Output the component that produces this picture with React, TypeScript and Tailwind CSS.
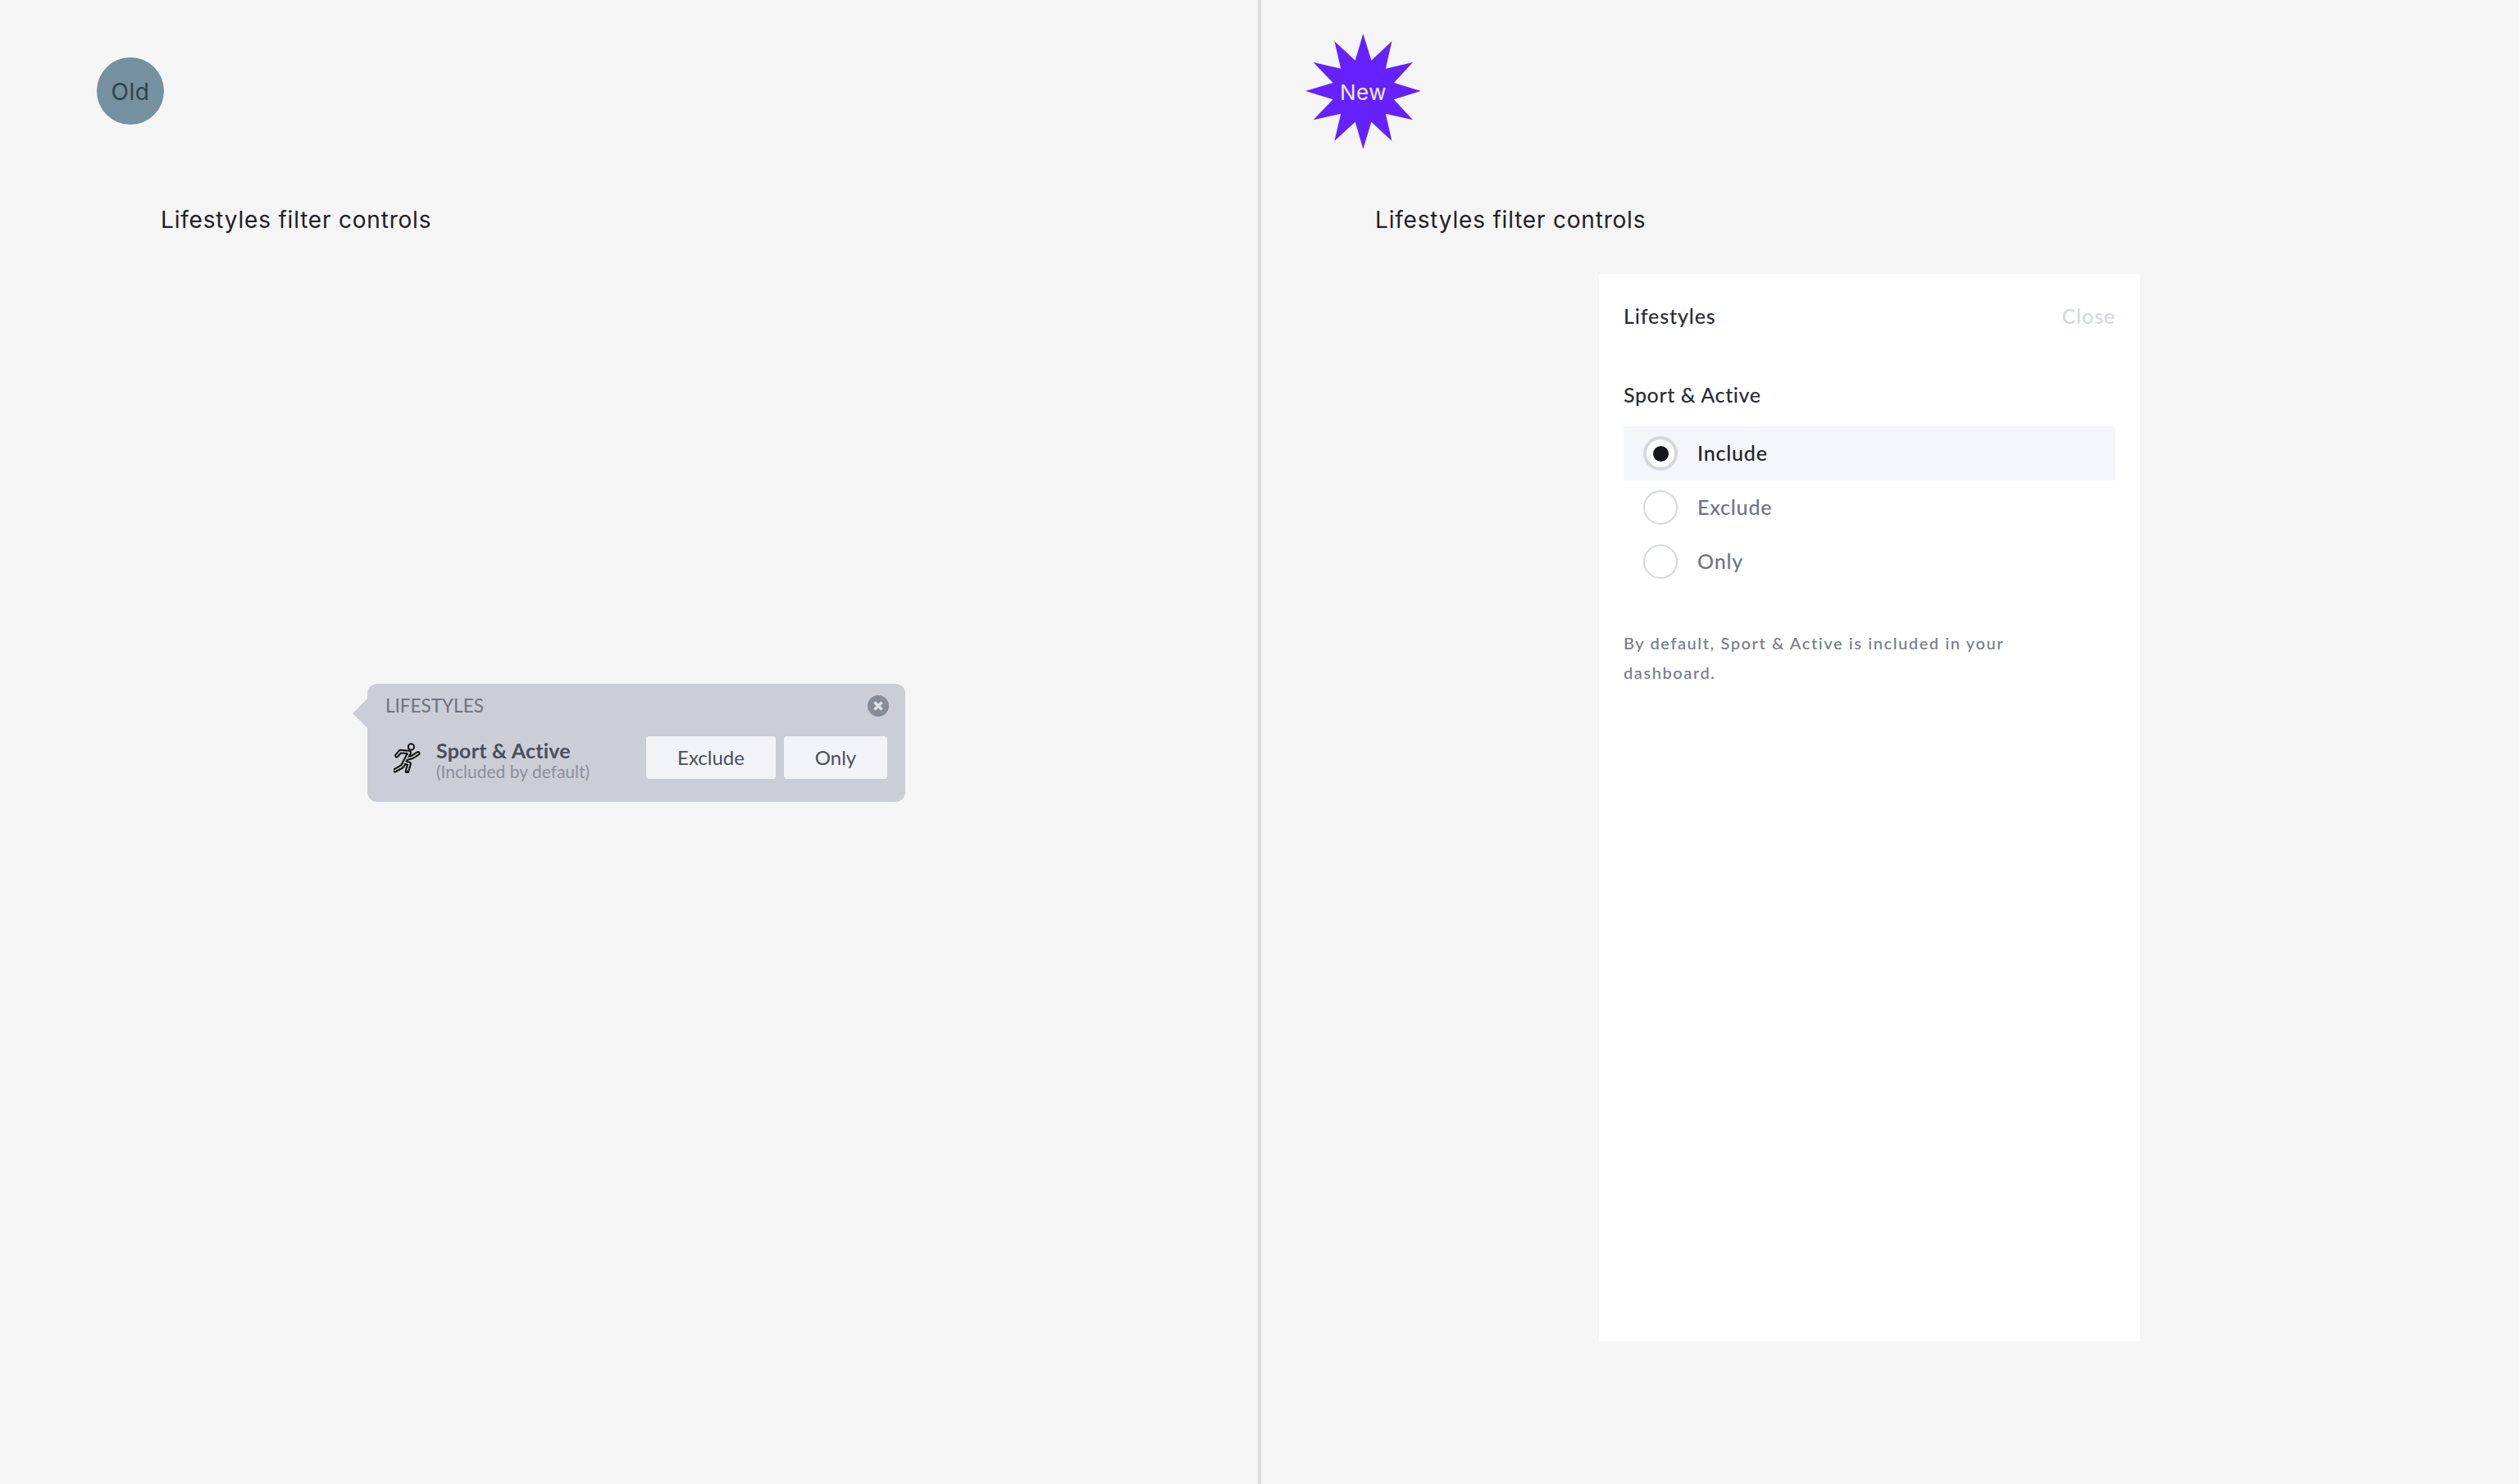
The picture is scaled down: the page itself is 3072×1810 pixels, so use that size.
const sans = "font-['Lato','Liberation_Sans',sans-serif]";

function Heading({ className }: { className: string }) {
  return (
    <h2 className={`font-['Inter',sans-serif] text-[28px] leading-[36px] font-normal tracking-[0.8px] text-[#1f2023] ${className}`}>
      Lifestyles filter controls
    </h2>
  );
}

function StarBadge() {
  return (
    <div className="relative h-[141px] w-[141px]">
      <svg viewBox="0 0 141 141" className="h-full w-full">
        <polygon
          fill="#6621ff"
          points="70.400,0 80.400,32.700 105.400,9.300 97.900,42.700 131,35 107.900,60 140.700,70 107.900,80.300 131,105.300 97.900,97.700 105.400,131 80.400,107.700 70.400,140.700 60.700,107.700 35.400,131 43.200,97.700 9.600,105.300 33.600,80.300 0,70 33.600,60 9.600,35 43.200,42.700 35.400,9.300 60.700,32.700"
        />
      </svg>
      <span className="absolute inset-0 flex items-center justify-center pt-[2px] font-['Inter',sans-serif] text-[26px] font-normal tracking-[0.5px] text-[#f0e9ff]">
        New
      </span>
    </div>
  );
}

function Runner() {
  const limbs = "M118 88 L85 85 L72 100 M118 90 L100 125 L92 140 L65 155 M100 125 L118 130 L110 158 M112 110 L130 105 L150 92";
  return (
    <svg viewBox="60 50 100 115" className="h-[38px] w-[33px] shrink-0" fill="none">
      <circle cx="125" cy="68" r="11" stroke="#111" strokeWidth="6" />
      <path d={limbs} stroke="#111" strokeWidth="17" strokeLinecap="round" strokeLinejoin="round" />
      <path d={limbs} stroke="#cbced6" strokeWidth="5" strokeLinecap="round" strokeLinejoin="round" strokeDasharray="7 5" />
    </svg>
  );
}

function OldPopup() {
  return (
    <div className={`relative flex h-[144px] w-[656px] flex-col rounded-[12px] bg-[#cbced6] pl-[22px] pr-[22px] ${sans}`}>
      <div className="absolute left-[-18px] top-[18px] h-[36px] w-[18px] bg-[#cbced6] [clip-path:polygon(100%_0,100%_100%,0_50%)]" />
      <div className="flex h-[54px] items-center justify-between">
        <span className="text-[22.500px] leading-none text-[#6d7380]">LIFESTYLES</span>
        <svg viewBox="0 0 26 26" className="mr-[-2px] h-[26px] w-[26px]">
          <circle cx="13" cy="13" r="13" fill="#878c99" />
          <path d="M8.500 8.500 L17.500 17.500 M17.500 8.500 L8.500 17.500" stroke="#dfe1e6" strokeWidth="3.500" />
        </svg>
      </div>
      <div className="mt-[10px] flex h-[52px] items-center">
        <div className="ml-[10px] mr-[19px]">
          <Runner />
        </div>
        <div className="flex w-[256px] flex-col pt-[6px]">
          <span className="text-[25px] leading-[28px] font-bold tracking-[0.2px] text-[#4a4f5c]">Sport &amp; Active</span>
          <span className="text-[21px] leading-[24px] text-[#8b909c]">(Included by default)</span>
        </div>
        <button className="h-[52px] w-[158px] rounded-[4px] bg-[#f2f3f7] text-[24px] text-[#4a4f5c]">Exclude</button>
        <button className="ml-[10px] h-[52px] w-[126px] rounded-[4px] bg-[#f2f3f7] text-[24px] text-[#4a4f5c]">Only</button>
      </div>
    </div>
  );
}

function Radio({ label, selected }: { label: string; selected?: boolean }) {
  return (
    <div className={`flex h-[66px] items-center pl-[24px] ${selected ? "bg-[#f4f5f9]" : ""}`}>
      <span
        className={`flex h-[42px] w-[42px] items-center justify-center rounded-full border-[#d5d7de] bg-white ${selected ? "border-4" : "border-2"}`}
      >
        {selected && <span className="h-[19px] w-[19px] rounded-full bg-[#15171c]" />}
      </span>
      <span className={`ml-[24px] text-[25px] font-medium tracking-[0.8px] ${selected ? "text-[#20222a]" : "text-[#6f7482]"}`}>
        {label}
      </span>
    </div>
  );
}

function NewPanel() {
  return (
    <div className={`h-[1302px] w-[660px] bg-white px-[30px] pt-[33px] ${sans}`}>
      <div className="flex items-center justify-between text-[25px] leading-[36px] font-medium tracking-[0.9px]">
        <span className="text-[#2a2c33]">Lifestyles</span>
        <span className="text-[#d5d7de]">Close</span>
      </div>
      <h3 className="mt-[60px] text-[25px] leading-[36px] font-medium tracking-[0.6px] text-[#2a2c33]">Sport &amp; Active</h3>
      <div className="mt-[21px] flex flex-col">
        <Radio label="Include" selected />
        <Radio label="Exclude" />
        <Radio label="Only" />
      </div>
      <p className="mt-[48px] w-[500px] text-[20px] leading-[36px] font-medium tracking-[1.600px] text-[#767b88]">
        By default, Sport &amp; Active is included in your dashboard.
      </p>
    </div>
  );
}

export default function App() {
  return (
    <div className="flex h-[1810px] w-[3072px] overflow-hidden bg-[#f5f5f5]">
      <section className="w-[1534px] shrink-0 pl-[118px] pt-[70px]">
        <div className="flex h-[82px] w-[82px] items-center justify-center rounded-full bg-[#75909e] pt-[1px] font-['Inter',sans-serif] text-[28px] tracking-[0.5px] text-[#2d4450]">
          Old
        </div>
        <Heading className="ml-[78px] mt-[98px]" />
        <div className="ml-[330px] mt-[548px]">
          <OldPopup />
        </div>
      </section>
      <div className="w-[4px] shrink-0 bg-[#dcdcdc]" />
      <section className="flex-1 pt-[41px]">
        <div className="ml-[54px]">
          <StarBadge />
        </div>
        <Heading className="ml-[139px] mt-[68px]" />
        <div className="ml-[412px] mt-[48px]">
          <NewPanel />
        </div>
      </section>
    </div>
  );
}
